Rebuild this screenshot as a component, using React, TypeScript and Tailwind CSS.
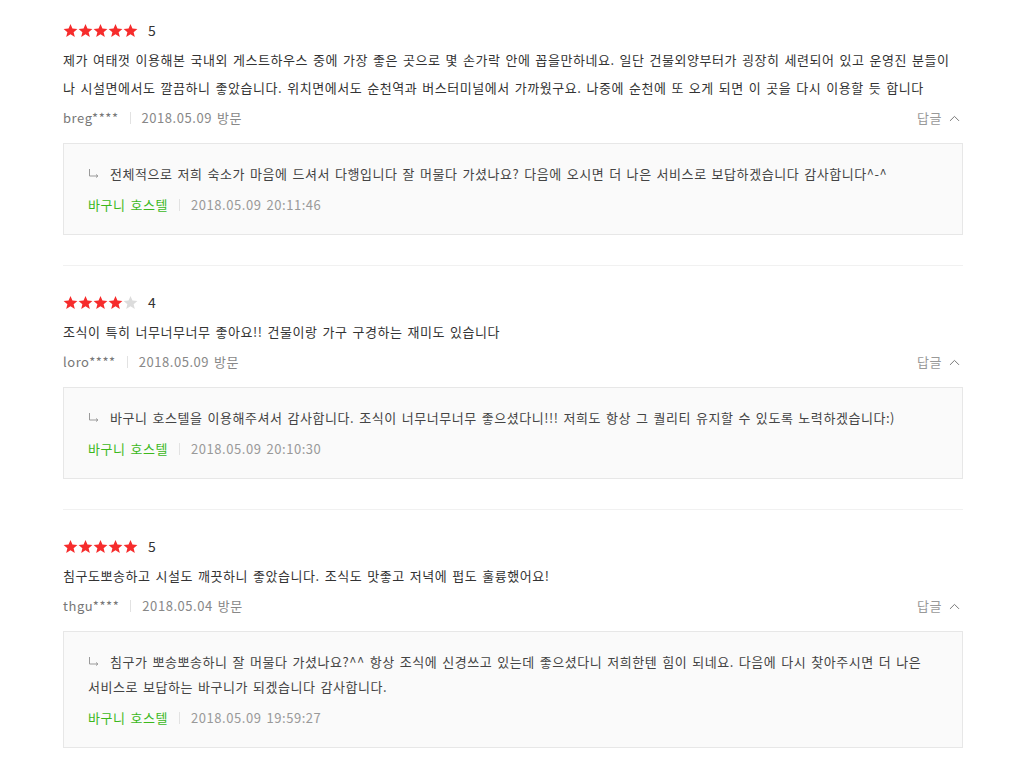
import { ChevronUp } from 'lucide-react';

interface ReviewProps {
  rating: number
  body: string
  user: string
  visited: string
  reply: string
  repliedAt: string
  last?: boolean
}

const reviews: ReviewProps[] = [
  {
    rating: 5,
    body: '제가 여태껏 이용해본 국내외 게스트하우스 중에 가장 좋은 곳으로 몇 손가락 안에 꼽을만하네요. 일단 건물외양부터가 굉장히 세련되어 있고 운영진 분들이 나 시설면에서도 깔끔하니 좋았습니다. 위치면에서도 순천역과 버스터미널에서 가까웠구요. 나중에 순천에 또 오게 되면 이 곳을 다시 이용할 듯 합니다',
    user: 'breg****',
    visited: '2018.05.09 방문',
    reply: '전체적으로 저희 숙소가 마음에 드셔서 다행입니다 잘 머물다 가셨나요? 다음에 오시면 더 나은 서비스로 보답하겠습니다 감사합니다^-^',
    repliedAt: '2018.05.09 20:11:46'
  },
  {
    rating: 4,
    body: '조식이 특히 너무너무너무 좋아요!! 건물이랑 가구 구경하는 재미도 있습니다',
    user: 'loro****',
    visited: '2018.05.09 방문',
    reply: '바구니 호스텔을 이용해주셔서 감사합니다. 조식이 너무너무너무 좋으셨다니!!! 저희도 항상 그 퀄리티 유지할 수 있도록 노력하겠습니다:)',
    repliedAt: '2018.05.09 20:10:30'
  },
  {
    rating: 5,
    body: '침구도뽀송하고 시설도 깨끗하니 좋았습니다. 조식도 맛좋고 저녁에 펍도 훌륭했어요!',
    user: 'thgu****',
    visited: '2018.05.04 방문',
    reply: '침구가 뽀송뽀송하니 잘 머물다 가셨나요?^^ 항상 조식에 신경쓰고 있는데 좋으셨다니 저희한텐 힘이 되네요. 다음에 다시 찾아주시면 더 나은 서비스로 보답하는 바구니가 되겠습니다 감사합니다.',
    repliedAt: '2018.05.09 19:59:27',
    last: true
  }
];

const Star = ({ filled }: { filled: boolean }) => (
  <svg width="15" height="15" viewBox="0 0 24 24" className={filled ? 'fill-[#f62c2c]' : 'fill-[#dcdcdc]'}>
    <path d="M12 1.5l3.1 7.3 7.9.6-6 5.2 1.9 7.7L12 18.1l-6.9 4.2L7 14.6 1 9.4l7.9-.6z" />
  </svg>
);

const ReplyArrow = () => (
  <svg width="12" height="10" viewBox="0 0 12 10" className="inline-block mr-[10px] -mt-[4px] align-middle">
    <path d="M1.5 1v7h8" fill="none" stroke="#9a9a9a" strokeWidth="1" />
    <path d="M8 6.5l2 1.5-2 1.5" fill="none" stroke="#9a9a9a" strokeWidth="1" />
  </svg>
);

// wider spacing so lines wrap like the original gothic font
const textCls = 'text-[13px] tracking-[0.55px] [word-spacing:1.5px]';

const Review = ({ rating, body, user, visited, reply, repliedAt, last }: ReviewProps) => {
  return <div className={`pb-[30px] ${last ? '' : 'border-b border-[#f1f1f1]'}`}>
    <div className="flex items-center h-[20px] pt-[26px] box-content">
      {[0, 1, 2, 3, 4].map((i) => <Star key={i} filled={i < rating} />)}
      <span className="ml-[10px] text-[14px] text-[#333]">{rating}</span>
    </div>
    <p className={`mt-[6px] leading-[28px] text-[#333] ${textCls}`}>{body}</p>
    <div className={`mt-[6px] flex items-center h-[20px] ${textCls}`}>
      <span className="text-[#777]">{user}</span>
      <span className="mx-[11px] h-[12px] w-px bg-[#e2e2e2]" />
      <span className="text-[#888]">{visited}</span>
      <button className="ml-auto flex items-center gap-[4px] text-[#999]">
        답글
        <ChevronUp size={17} strokeWidth={1.4} className="text-[#777]" />
      </button>
    </div>
    <div className="mt-[15px] border border-[#e7e7e7] bg-[#fafafa] pl-[24px] pr-[24px] pt-[17px] pb-[19px]">
      <p className={`leading-[25px] text-[#444] ${textCls}`}><ReplyArrow />{reply}</p>
      <div className={`mt-[9px] flex items-center h-[20px] ${textCls}`}>
        <span className="text-[#3cb81c]">바구니 호스텔</span>
        <span className="mx-[11px] h-[12px] w-px bg-[#e2e2e2]" />
        <span className="text-[#999]">{repliedAt}</span>
      </div>
    </div>
  </div>;
};

export default function App() {
  return <div className="min-h-[766px] bg-white" style={{ fontFamily: '"Noto Sans CJK KR", "Noto Sans", sans-serif' }}>
    <div className="ml-[63px] w-[900px] -mt-[6px]">
      {reviews.map((r) => <Review key={r.user} {...r} />)}
    </div>
  </div>;
}
